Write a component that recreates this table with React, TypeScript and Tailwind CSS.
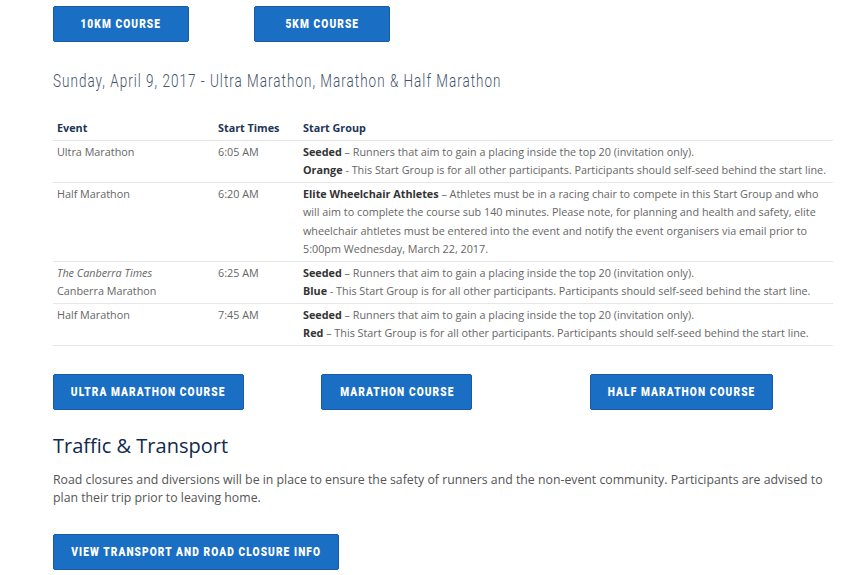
function CourseButton({ label, width }: { label: string; width: string }) {
  return (
    <a
      href="#"
      className={`${width} inline-flex h-9 items-center justify-center overflow-hidden rounded-[2px] border border-[#155ca8] bg-[#1a6fc4] font-['Roboto',sans-serif] text-[13px] font-black uppercase tracking-[1.4px] whitespace-nowrap text-white`}
    >
      <span className="inline-block scale-x-[0.78]">{label}</span>
    </a>
  );
}

type Row = {
  event: React.ReactNode;
  time: string;
  groups: React.ReactNode[];
};

const rows: Row[] = [
  {
    event: "Ultra Marathon",
    time: "6:05 AM",
    groups: [
      <>
        <b className="text-[#333]">Seeded</b> – Runners that aim to gain a placing inside the top 20 (invitation only).
      </>,
      <>
        <b className="text-[#333]">Orange</b> - This Start Group is for all other participants. Participants should self-seed behind the start line.
      </>,
    ],
  },
  {
    event: "Half Marathon",
    time: "6:20 AM",
    groups: [
      <>
        <b className="text-[#333]">Elite Wheelchair Athletes</b> – Athletes must be in a racing chair to compete in this Start Group and who will aim to complete the course sub 140 minutes. Please note, for planning and health and safety, elite wheelchair ahtletes must be entered into the event and notify the event organisers via email prior to 5:00pm Wednesday, March 22, 2017.
      </>,
    ],
  },
  {
    event: (
      <>
        <i>The Canberra Times</i>
        <br />
        Canberra Marathon
      </>
    ),
    time: "6:25 AM",
    groups: [
      <>
        <b className="text-[#333]">Seeded</b> – Runners that aim to gain a placing inside the top 20 (invitation only).
      </>,
      <>
        <b className="text-[#333]">Blue</b> - This Start Group is for all other participants. Participants should self-seed behind the start line.
      </>,
    ],
  },
  {
    event: "Half Marathon",
    time: "7:45 AM",
    groups: [
      <>
        <b className="text-[#333]">Seeded</b> – Runners that aim to gain a placing inside the top 20 (invitation only).
      </>,
      <>
        <b className="text-[#333]">Red</b> – This Start Group is for all other participants. Participants should self-seed behind the start line.
      </>,
    ],
  },
];

export default function App() {
  return (
    <div className="min-h-[575px] bg-white font-['Open_Sans',sans-serif] text-[#666]">
      <div className="ml-[53px] w-[780px] pt-[6px]">
        {/* short courses */}
        <div className="grid w-[805px] grid-cols-4">
          <div>
            <CourseButton label="10km Course" width="w-[136px]" />
          </div>
          <div>
            <CourseButton label="5km Course" width="w-[136px]" />
          </div>
        </div>

        <h3 className="mt-[27px] origin-left scale-x-[0.75] font-['Roboto',sans-serif] text-[18px] font-light leading-[24px] tracking-[1.35px] whitespace-nowrap text-[#44536b]">
          Sunday, April 9, 2017 - Ultra Marathon, Marathon &amp; Half Marathon
        </h3>

        <table className="mt-[26px] w-full border-collapse text-left text-[10.8px] leading-[18.5px]">
          <thead>
            <tr className="border-b border-[#e6e6e6]">
              <th className="w-[161px] px-1 pb-[2px] font-bold text-[#1d3557]">Event</th>
              <th className="w-[85px] px-1 pb-[2px] font-bold text-[#1d3557]">Start Times</th>
              <th className="px-1 pb-[2px] font-bold text-[#1d3557]">Start Group</th>
            </tr>
          </thead>
          <tbody>
            {rows.map((r, i) => (
              <tr key={i} className="border-b border-[#e6e6e6] align-top">
                <td className="px-1 py-[2px]">{r.event}</td>
                <td className="px-1 py-[2px]">{r.time}</td>
                <td className="px-1 py-[2px]">
                  {r.groups.map((g, j) => (
                    <div key={j}>{g}</div>
                  ))}
                </td>
              </tr>
            ))}
          </tbody>
        </table>

        {/* long courses */}
        <div className="mt-[28px] grid w-[805px] grid-cols-3">
          <div>
            <CourseButton label="Ultra Marathon Course" width="w-[191px]" />
          </div>
          <div>
            <CourseButton label="Marathon Course" width="w-[151px]" />
          </div>
          <div>
            <CourseButton label="Half Marathon Course" width="w-[183px]" />
          </div>
        </div>

        <h2 className="mt-[21px] text-[20px] leading-[30px] text-[#102a4c]">Traffic &amp; Transport</h2>
        <p className="mt-[10px] text-[12.3px] leading-[18px] text-[#555]">
          Road closures and diversions will be in place to ensure the safety of runners and the non-event community. Participants are advised to plan their trip prior to leaving home.
        </p>

        <div className="mt-[27px]">
          <CourseButton label="View Transport and Road Closure Info" width="w-[286px]" />
        </div>
      </div>
    </div>
  );
}
